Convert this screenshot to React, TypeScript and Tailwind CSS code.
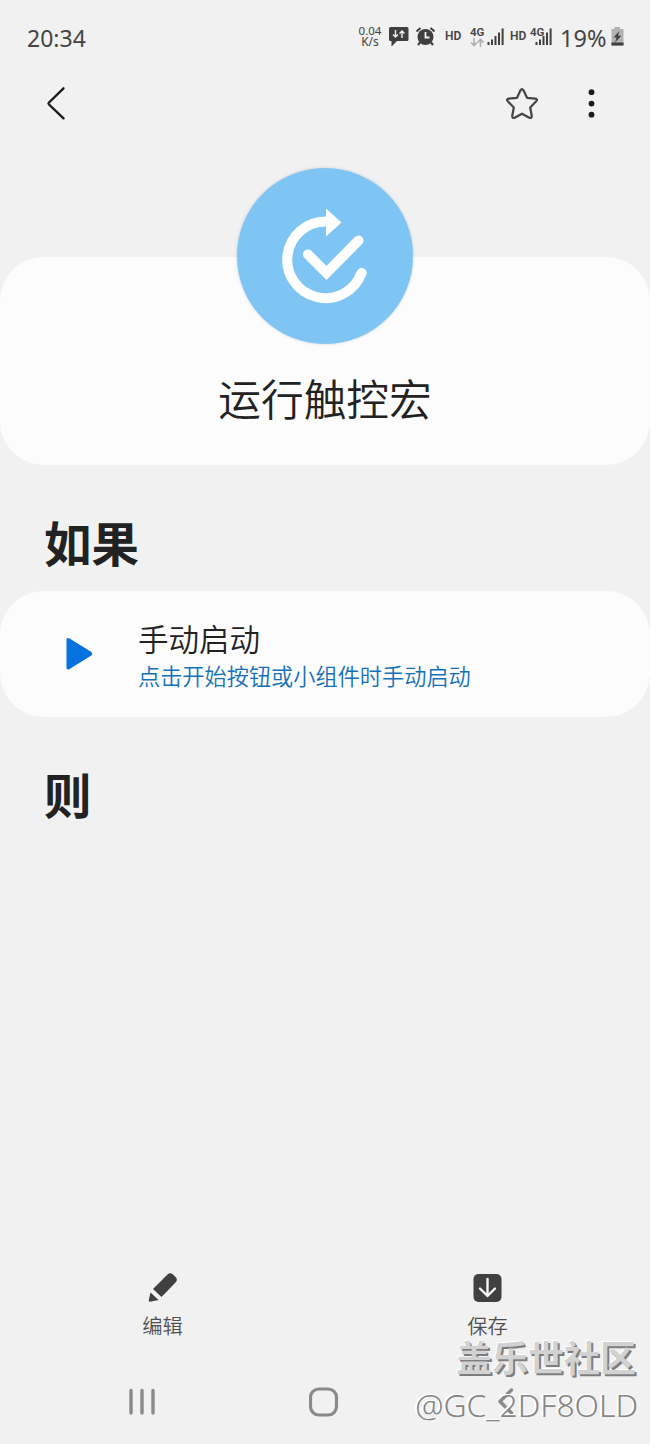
import type { ReactNode } from 'react';

function SignalBars() {
  return (
    <svg width="18" height="18" viewBox="0 0 18 18" fill="#3f3f3f">
      <rect x="0.5" y="14" width="2" height="3" />
      <rect x="4" y="11.5" width="2" height="5.5" />
      <rect x="7.5" y="8" width="2" height="9" />
      <rect x="11" y="4.5" width="2" height="12.5" />
      <rect x="14.6" y="0.5" width="2" height="16.5" />
    </svg>
  );
}

function StatusBar() {
  return (
    <div className="flex h-[75px] items-start pt-[28px] pl-[27px] text-[#444444]">
      <div className="w-[331px] text-[23px] leading-[20px]">20:34</div>
      <div className="w-[31px]">
        <div className="-mt-[2px] w-[24px] text-center text-[11.5px] leading-[10.5px]">
          <div>0.04</div>
          <div className="text-[12px]">K/s</div>
        </div>
      </div>
      <svg className="-mt-[1px]" width="20" height="20" viewBox="0 0 20 20">
        <path d="M1.5 0h16.500q1.500 0 1.500 1.500v11q0 1.500-1.500 1.500h-10l-5.500 5.500v-5.500h-1q-1.500 0-1.500-1.500v-11q0-1.500 1.500-1.500z" fill="#3f3f3f" />
        <path d="M6.500 3v7M4 7.500l2.500 2.500 2.500-2.500M13 11v-7M10.500 6.500l2.500-2.500 2.500 2.500" stroke="#f1f1f1" strokeWidth="1.400" fill="none" />
      </svg>
      <svg className="-mt-[1px] ml-[6px]" width="20" height="19" viewBox="0 0 20 19">
        <circle cx="10.500" cy="10" r="8" fill="#3f3f3f" />
        <path d="M1.500 4.500l4-3.500M19.500 4.500l-4-3.500" stroke="#3f3f3f" strokeWidth="2" />
        <path d="M5 15.500l-2 2.500M16 15.500l2 2.500" stroke="#3f3f3f" strokeWidth="2.200" />
        <path d="M10.500 5v5.500h4" stroke="#f1f1f1" strokeWidth="1.800" fill="none" />
      </svg>
      <div className="ml-[10px] mt-[2px] w-[25px] font-[Roboto] text-[12px] leading-[12px] font-semibold">HD</div>
      <div className="w-[17px] font-[Roboto] text-[11.5px] leading-[9px] font-semibold">
        4G
        <svg className="mt-[1px]" width="14" height="9" viewBox="0 0 14 9" fill="none" stroke="#b0b0b0" strokeWidth="1.600">
          <path d="M4 0v7.500M1 4.500l3 3 3-3M10.500 9v-7.500M7.500 4.500l3-3 3 3" />
        </svg>
      </div>
      <SignalBars />
      <div className="ml-[5px] mt-[2px] w-[20px] font-[Roboto] text-[12px] leading-[12px] font-semibold">HD</div>
      <div className="w-[5px] font-[Roboto] text-[11.5px] leading-[9px] font-semibold">4G</div>
      <SignalBars />
      <div className="ml-[7px] w-[51px] text-[23.5px] leading-[20px]">19%</div>
      <svg className="-mt-[1px]" width="13" height="19" viewBox="0 0 13 19">
        <path d="M3.500 0h5.500v2h3.500v16.500h-12v-16.500h3z" fill="#b2b2b2" />
        <rect x="0.5" y="15.500" width="12" height="3" fill="#3f3f3f" />
        <path d="M8.500 4l-6 6.500h3.200l-1.700 5 6.300-6.700h-3.300z" fill="#3f3f3f" />
      </svg>
    </div>
  );
}

function TopBar() {
  return (
    <div className="flex h-[58px] items-center pl-[44px] pr-[52px]">
      <svg width="24" height="40" viewBox="0 0 24 40" fill="none" stroke="#1b1b1b" strokeWidth="2.400" strokeLinecap="round" strokeLinejoin="round">
        <path d="M19.500 4.300L5 18.500q-1 1 0 2L19.500 34.300" />
      </svg>
      <svg className="ml-auto" width="34" height="34" viewBox="0 0 34 34" fill="none" stroke="#444444" strokeWidth="2.200" strokeLinejoin="round">
        <path d="M15.500 3.300Q17 0.800 18.500 3.300L22 10.800L30.400 11.600Q33 12.300 31.200 14.300L25.200 20.500L26.800 29Q26.700 31.600 24.300 30.700L17 26.700L9.700 30.700Q7.300 31.600 7.200 29L8.800 20.500L2.800 14.300Q1 12.300 3.600 11.600L12 10.800Z" />
      </svg>
      <svg className="ml-[47px]" width="12" height="34" viewBox="0 0 12 34" fill="#1b1b1b">
        <circle cx="5.500" cy="5.200" r="2.900" />
        <circle cx="5.500" cy="16.600" r="2.900" />
        <circle cx="5.500" cy="27.700" r="2.900" />
      </svg>
    </div>
  );
}

function RoutineCard() {
  return (
    <div className="mt-[124px] flex h-[208px] flex-col items-center rounded-[44px] bg-[#fcfcfc]">
      <div className="-mt-[89px] h-[176px] w-[176px] shrink-0 rounded-full bg-[#7ec5f4] shadow-[0_0_3px_rgba(90,130,160,0.35)]">
        <svg width="176" height="176" viewBox="0 0 176 176" fill="none" stroke="#ffffff">
          <path d="M89 53.500A38.300 38.300 0 1 0 124.500 105" strokeWidth="10" />
          <circle cx="124.700" cy="105" r="5" fill="#ffffff" stroke="none" />
          <path d="M89 40.500L104.500 54.500L89 68.500Z" fill="#ffffff" stroke="none" />
          <path d="M71 86.500L89.500 105L121.500 72.500" strokeWidth="10" strokeLinecap="round" />
        </svg>
      </div>
      <div className="mt-[30px] text-[42.700px] leading-[52px] font-[350] text-[#222222]">运行触控宏</div>
    </div>
  );
}

function TriggerCard() {
  return (
    <div className="flex h-[126px] items-center rounded-[44px] bg-[#fcfcfc] pl-[66px]">
      <svg width="28" height="34" viewBox="0 0 28 34" fill="#0572dd">
        <path d="M0.500 3Q0.500 0 3.500 1.500L25 14.800Q27.500 17 25 18.700L3.500 32Q0.500 33.500 0.500 30.500Z" />
      </svg>
      <div className="ml-[44px] pt-[5px]">
        <div className="text-[30.500px] leading-[41px] font-[350] text-[#222222]">手动启动</div>
        <div className="text-[22.200px] leading-[34px] font-[350] text-[#1570b5]">点击开始按钮或小组件时手动启动</div>
      </div>
    </div>
  );
}

function Action({ label, children }: { label: string; children: ReactNode }) {
  return (
    <div className="flex flex-1 flex-col items-center">
      {children}
      <div className="mt-[10px] text-[20.300px] leading-[24px] font-[350] text-[#505050]">{label}</div>
    </div>
  );
}

function BottomActions() {
  return (
    <div className="mt-auto flex h-[88px]">
      <Action label="编辑">
        <svg width="32" height="32" viewBox="0 0 32 32" fill="#404040">
          <path d="M6 17L20.500 2.500Q23 0 26 2.500L29 5.500Q31 8 28.500 10.500L14.500 25Z" />
          <path d="M3.500 20.500L11.500 28L3 29.800Q1.500 30 1.800 28Z" />
        </svg>
      </Action>
      <Action label="保存">
        <svg width="32" height="32" viewBox="0 0 32 32">
          <rect x="1.500" y="2" width="28" height="28" rx="5" fill="#404040" />
          <path d="M15.500 7v17M8 16.500l7.500 7.500 7.500-7.500" fill="none" stroke="#f5f5f5" strokeWidth="2.400" strokeLinecap="round" strokeLinejoin="round" />
        </svg>
      </Action>
    </div>
  );
}

function NavBar() {
  return (
    <div className="flex h-[84px] items-center pl-[128px] text-[#8a8a8a]">
      <svg width="28" height="30" viewBox="0 0 28 30" fill="none" stroke="currentColor" strokeWidth="3.400" strokeLinecap="round">
        <path d="M3 3.500v22.500M14 3.500v22.500M25 3.500v22.500" />
      </svg>
      <svg className="ml-[153px]" width="30" height="30" viewBox="0 0 30 30" fill="none" stroke="currentColor" strokeWidth="3.200">
        <rect x="1.500" y="2" width="26" height="26" rx="8.500" />
      </svg>
      <svg className="ml-[158px]" width="20" height="30" viewBox="0 0 20 30" fill="none" stroke="currentColor" strokeWidth="3.400" strokeLinecap="round" strokeLinejoin="round">
        <path d="M14.500 3L3 14.500L14.500 26" />
      </svg>
    </div>
  );
}

function Watermark() {
  return (
    <div className="absolute right-[12px] bottom-[15px] text-right whitespace-nowrap">
      <div className="mr-[2px] mb-[4px] text-[36px] leading-[37px] font-bold text-[#d2d2d2] [text-shadow:2px_2px_0_#7d7d7d,-1px_-1px_0_#ffffff]">盖乐世社区</div>
      <div className="text-[31.800px] leading-[48px] font-light text-[#858585] [text-shadow:-1px_-1px_0_#ffffff,-2px_-1px_0_#ffffff]">@GC_2DF8OLD</div>
    </div>
  );
}

export default function App() {
  return (
    <div className="relative flex h-[1444px] w-[650px] flex-col overflow-hidden bg-[#f1f1f1] font-['Noto_Sans','Noto_Sans_CJK_SC',sans-serif]">
      <StatusBar />
      <TopBar />
      <RoutineCard />
      <h2 className="mt-[45px] h-[81px] pl-[44px] text-[47.500px] leading-[68px] font-bold text-[#222222]">如果</h2>
      <TriggerCard />
      <h2 className="mt-[45px] pl-[44px] text-[47.500px] leading-[68px] font-bold text-[#222222]">则</h2>
      <BottomActions />
      <NavBar />
      <Watermark />
    </div>
  );
}
